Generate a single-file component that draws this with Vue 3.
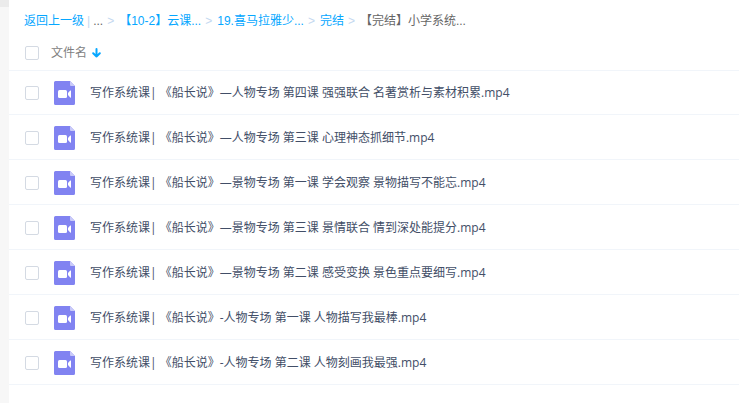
<template>
  <div class="page">
    <aside class="side-strip"></aside>

    <main class="file-panel">
      <nav class="breadcrumb" aria-label="路径">
        <a class="crumb-link" href="#">返回上一级</a>
        <span class="crumb-divider">|</span>
        <span class="crumb-more">...</span>
        <template v-for="crumb in crumbs" :key="crumb">
          <span class="crumb-arrow">&gt;</span>
          <a class="crumb-link" href="#">{{ crumb }}</a>
        </template>
        <span class="crumb-arrow">&gt;</span>
        <span class="crumb-current">【完结】小学系统...</span>
      </nav>

      <table class="file-table">
        <colgroup>
          <col class="check-col" />
          <col class="icon-col" />
          <col />
        </colgroup>
        <thead>
          <tr class="head-row">
            <th class="check-cell">
              <input v-model="allChecked" class="checkbox" type="checkbox" aria-label="全选" />
            </th>
            <th class="head-name" colspan="2">
              <button type="button" class="sort-button" @click="toggleSort">
                文件名
                <svg class="sort-icon" :class="{ up: !descending }" viewBox="0 0 9 10" aria-hidden="true">
                  <path
                    d="M4.5 1V8.4M1.2 5.2L4.5 8.5L7.8 5.2"
                    fill="none"
                    stroke="#06a7ff"
                    stroke-width="2"
                    stroke-linecap="round"
                    stroke-linejoin="round"
                  />
                </svg>
              </button>
            </th>
          </tr>
        </thead>
        <tbody>
          <tr v-for="file in sortedFiles" :key="file" class="file-row">
            <td class="check-cell">
              <input v-model="selected" class="checkbox" type="checkbox" :value="file" :aria-label="file" />
            </td>
            <td class="icon-cell">
              <svg class="file-icon" viewBox="0 0 21 24" aria-hidden="true">
                <path d="M1.5 0H16L21 5V22.5a1.5 1.5 0 0 1-1.5 1.5H1.5a1.5 1.5 0 0 1-1.5-1.5V1.5a1.5 1.5 0 0 1 1.5-1.5z" fill="#8183f1" />
                <path d="M16 0L21 5H17a1 1 0 0 1-1-1z" fill="#c9caf9" />
                <rect x="4" y="9" width="9" height="8" rx="1.5" fill="#fff" />
                <path d="M14 12L16.2 9.6Q17 9 17 10V16Q17 17 16.2 16.4L14 14z" fill="#fff" />
              </svg>
            </td>
            <td class="name-cell">
              <a class="file-name" href="#">{{ file }}</a>
            </td>
          </tr>
        </tbody>
      </table>
    </main>
  </div>
</template>

<script setup>
import { computed, ref } from "vue";

const crumbs = ["【10-2】云课...", "19.喜马拉雅少...", "完结"];

const files = [
  "写作系统课| 《船长说》—人物专场 第四课 强强联合 名著赏析与素材积累.mp4",
  "写作系统课| 《船长说》—人物专场 第三课 心理神态抓细节.mp4",
  "写作系统课| 《船长说》—景物专场 第一课 学会观察 景物描写不能忘.mp4",
  "写作系统课| 《船长说》—景物专场 第三课 景情联合 情到深处能提分.mp4",
  "写作系统课| 《船长说》—景物专场 第二课 感受变换 景色重点要细写.mp4",
  "写作系统课| 《船长说》-人物专场 第一课 人物描写我最棒.mp4",
  "写作系统课| 《船长说》-人物专场 第二课 人物刻画我最强.mp4",
];

const selected = ref([]);
const descending = ref(true);

const sortedFiles = computed(() => (descending.value ? files : [...files].reverse()));

const allChecked = computed({
  get: () => selected.value.length === files.length,
  set: (value) => {
    selected.value = value ? [...files] : [];
  },
});

const toggleSort = () => {
  descending.value = !descending.value;
};
</script>

<style>
body {
  margin: 0;
  background: #ffffff;
}
</style>

<style scoped>
.page {
  display: flex;
  min-height: 100vh;
  font-family: "Open Sans", "Noto Sans CJK SC", sans-serif;
  font-size: 12px;
  line-height: 18px;
  color: #424e67;
}

.side-strip {
  flex: none;
  width: 9px;
  background: linear-gradient(#ebebeb 7px, #f7f7f7 7px);
}

.file-panel {
  flex: 1;
  min-width: 0;
}

.breadcrumb {
  display: flex;
  align-items: center;
  padding: 12px 15px 4px;
  font-family: "Liberation Sans", "Noto Sans CJK SC", sans-serif;
  white-space: nowrap;
}

.crumb-link {
  color: #06a7ff;
  text-decoration: none;
}

.crumb-divider {
  margin: 0 3px;
  color: #c4d8f0;
}

.crumb-arrow {
  margin: 0 5px 0 4px;
  color: #c4d8f0;
}

.crumb-more,
.crumb-current {
  color: #666666;
}

.file-table {
  width: 100%;
  border-spacing: 0;
  table-layout: fixed;
}

.check-col {
  width: 42px;
}

.icon-col {
  width: 39px;
}

.head-row {
  height: 36px;
}

.file-table th,
.file-table td {
  box-sizing: border-box;
  padding: 0;
  text-align: left;
  vertical-align: middle;
}

.file-table .check-cell {
  padding-left: 16px;
}

.file-table .icon-cell {
  padding-left: 3px;
}

.file-table .head-row th {
  padding-top: 1px;
}

.file-table .file-row td {
  height: 45px;
  padding-top: 1px;
  border-bottom: 1px solid #f1f5fa;
}

.file-table .file-row:first-child td {
  padding-top: 0;
  border-top: 1px solid #f1f5fa;
}

.checkbox {
  display: block;
  appearance: none;
  box-sizing: border-box;
  width: 14px;
  height: 14px;
  margin: 0;
  border: 1px solid #d4dae3;
  border-radius: 2px;
  background: #ffffff;
  cursor: pointer;
}

.checkbox:checked {
  border-color: #06a7ff;
  background: #06a7ff;
}

.sort-button {
  display: flex;
  align-items: center;
  gap: 5px;
  padding: 0;
  border: none;
  background: transparent;
  font: inherit;
  font-weight: 400;
  color: #818181;
  cursor: pointer;
}

.sort-icon {
  width: 9px;
  height: 10px;
}

.sort-icon.up {
  transform: rotate(180deg);
}

.file-icon {
  display: block;
  width: 21px;
  height: 24px;
}

.file-name {
  color: inherit;
  text-decoration: none;
  white-space: nowrap;
}

.file-name:hover {
  color: #06a7ff;
}
</style>
